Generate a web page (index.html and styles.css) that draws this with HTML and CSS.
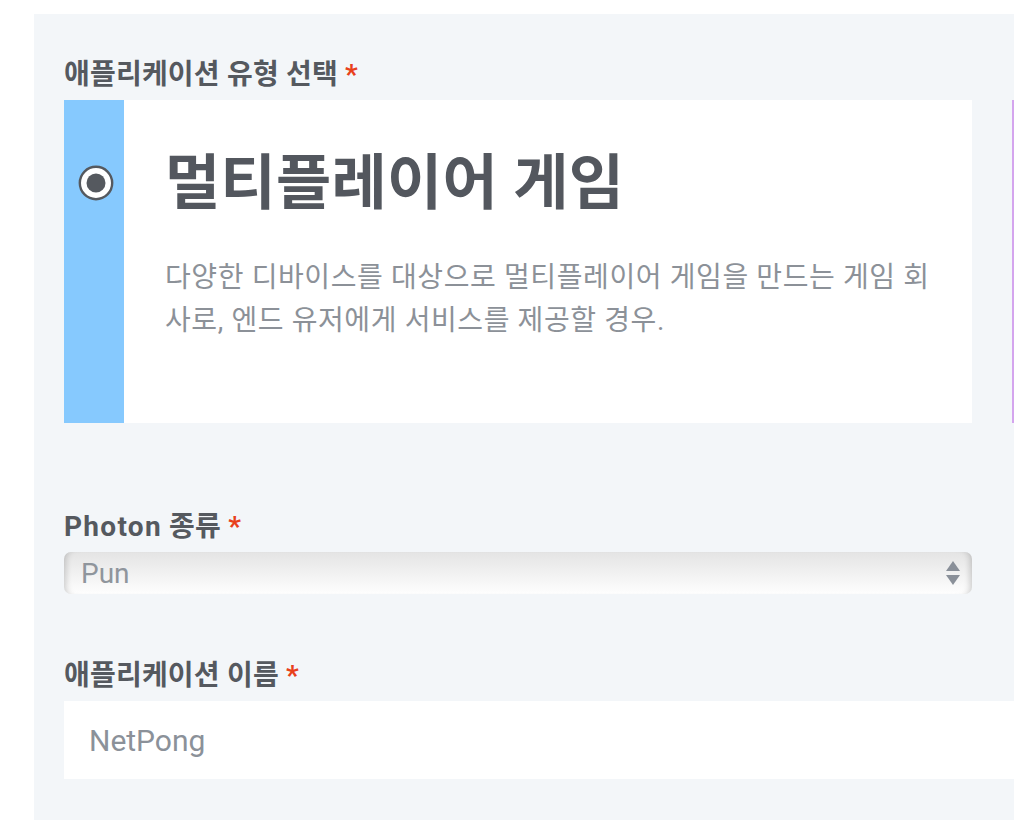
FILE: index.html
```html
<!DOCTYPE html>
<html lang="ko">
<head>
<meta charset="utf-8">
<link rel="stylesheet" href="styles.css">
</head>
<body>
<div class="panel">
  <div class="label">애플리케이션 유형 선택 <span class="req">*</span></div>
  <div class="cards">
    <div class="card">
      <div class="stripe">
        <svg class="radio" width="36" height="36" viewBox="0 0 36 36"><circle cx="18" cy="18" r="16.2" fill="#fff" stroke="#55595f" stroke-width="2.4"/><circle cx="18" cy="18" r="9.5" fill="#55595f"/></svg>
      </div>
      <div class="card-body">
        <div class="card-title">멀티플레이어 게임</div>
        <div class="card-desc">다양한 디바이스를 대상으로 멀티플레이어 게임을 만드는 게임 회사로, 엔드 유저에게 서비스를 제공할 경우.</div>
      </div>
    </div>
    <div class="card card-alt">
      <div class="stripe stripe-alt"></div>
      <div class="card-body"></div>
    </div>
  </div>
  <div class="label"><span class="label-latin">Photon</span> 종류 <span class="req">*</span></div>
  <div class="select">
    <span class="select-text">Pun</span>
    <svg class="arrows" width="16" height="26" viewBox="0 0 16 26"><path d="M8 1 L15 11 L1 11 Z" fill="#8a9099"/><path d="M1 15 L15 15 L8 25 Z" fill="#8a9099"/></svg>
  </div>
  <div class="label">애플리케이션 이름 <span class="req">*</span></div>
  <div class="input">NetPong</div>
</div>
</body>
</html>
```
FILE: styles.css
```css
html, body {
  margin: 0;
  padding: 0;
  background: #ffffff;
  overflow: hidden;
}
body {
  font-family: Roboto, "Noto Sans CJK KR", sans-serif;
  height: 820px;
}
.panel {
  margin: 14px 0 0 34px;
  background: #f3f6f9;
  padding: 43px 0 0 30px;
  height: 820px;
  box-sizing: border-box;
  width: 1100px;
}
.label {
  font-size: 28px;
  font-weight: 700;
  line-height: 36px;
  color: #55595f;
  margin-bottom: 7px;
  letter-spacing: 0.2px;
}
.label-latin {
  letter-spacing: 1.3px;
}
.req {
  color: #e8401c;
}
.cards {
  display: flex;
  gap: 40px;
  margin-bottom: 86px;
}
.card {
  flex: 0 0 908px;
  height: 323px;
  display: flex;
  background: #ffffff;
}
.stripe {
  flex: 0 0 60px;
  background: #86c9fe;
  display: flex;
  justify-content: center;
  align-items: flex-start;
}
.stripe-alt {
  background: #d4a5ee;
}
.radio {
  margin-top: 65px;
  margin-left: 4px;
}
.card-body {
  flex: 1;
  padding: 50px 30px 0 41px;
}
.card-title {
  font-size: 60px;
  font-weight: 700;
  line-height: 68px;
  color: #53575e;
  letter-spacing: 0.3px;
}
.card-desc {
  margin-top: 38px;
  font-size: 28px;
  line-height: 43px;
  color: #8c9198;
  letter-spacing: 0.6px;
}
.select {
  width: 908px;
  height: 42px;
  box-sizing: border-box;
  border-radius: 7px;
  background: linear-gradient(#e4e4e4, #fefefe);
  box-shadow: inset 7px 0 6px -5px rgba(0,0,0,0.18), inset -7px 0 6px -5px rgba(0,0,0,0.18);
  display: flex;
  align-items: center;
  justify-content: space-between;
  padding: 0 11px 0 17px;
  margin-bottom: 64px;
}
.select-text {
  font-size: 28px;
  color: #8f959c;
}
.arrows {
  display: block;
}
.input {
  width: 1000px;
  height: 78px;
  background: #ffffff;
  box-sizing: border-box;
  padding-left: 25px;
  display: flex;
  align-items: center;
  font-size: 30px;
  color: #8b9199;
}
```
